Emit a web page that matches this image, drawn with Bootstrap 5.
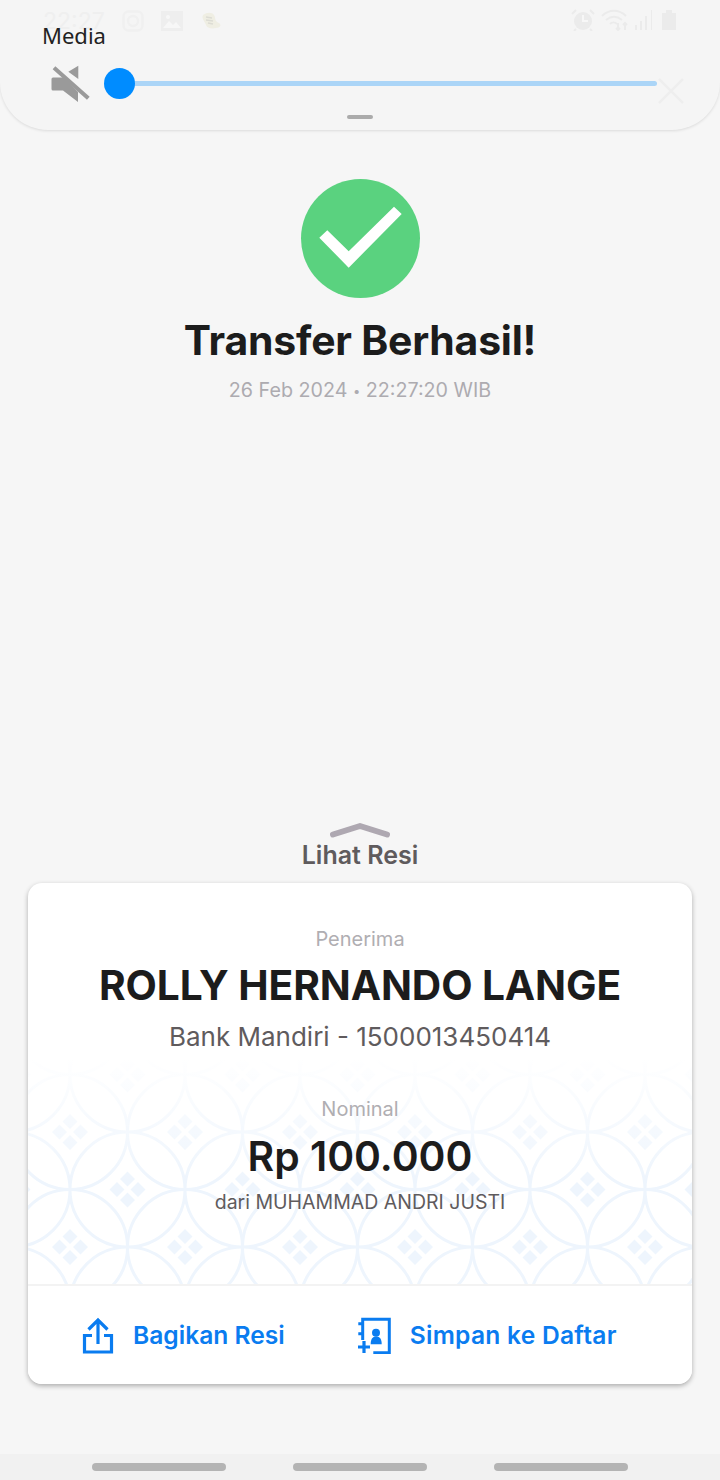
<!DOCTYPE html>
<html lang="en">
<head>
  <meta charset="UTF-8" />
  <meta name="viewport" content="width=device-width, initial-scale=1.0"/>
  <title>Transfer Berhasil</title>
  <link href="https://cdn.jsdelivr.net/npm/bootstrap@5.3.0/dist/css/bootstrap.min.css" rel="stylesheet" />
  <style>
    html, body { width: 720px; height: 1480px; overflow: hidden; }
    body { background: #f6f6f6; font-family: Inter, "Liberation Sans", sans-serif; color: #1c1c1c; }
    .screen { height: 1480px; }

    .media-panel { height: 130px; background: #f5f5f5; border-radius: 0 0 48px 48px; box-shadow: 0 1px 3px rgba(0,0,0,.11); position: relative; }
    .ghost-left { position: absolute; left: 43px; top: 9px; height: 24px; gap: 17px; color: #efefef; font-size: 23px; }
    .ghost-right { position: absolute; left: 571px; top: 9px; gap: 6px; }
    .media-label { position: absolute; left: 42px; top: 21px; font-size: 22px; line-height: 28px; color: #222; font-family: "Noto Sans", sans-serif; }
    .media-mute { position: absolute; left: 50px; top: 64px; }
    .media-track { position: absolute; left: 120px; top: 81px; width: 537px; height: 5px; border-radius: 3px; background: #abd5f7; }
    .media-thumb { position: absolute; left: 104px; top: 68px; width: 31px; height: 31px; border-radius: 50%; background: #008cff; }
    .media-close { position: absolute; left: 657px; top: 77px; }
    .media-handle { position: absolute; left: 347px; top: 115px; width: 26px; height: 4px; border-radius: 2px; background: #ababab; }

    .check-circle { width: 119px; height: 119px; margin-top: 49px; display: block; }
    .done-title { font-size: 40.9px; font-weight: 700; line-height: 46px; margin-top: 19px; letter-spacing: -.2px; }
    .done-date { font-size: 19.7px; line-height: 26px; margin-top: 14px; color: #adabb0; }
    .date-dot { font-size: 13px; vertical-align: 1px; }

    .receipt-toggle { margin-bottom: 14px; }
    .receipt-label { font-size: 25px; font-weight: 600; line-height: 28px; color: #5f5b5d; margin-top: -1px; }

    .receipt-card { margin: 0 28px 70px; height: 501px; border: 0; border-radius: 14px; box-shadow: 0 2px 5px rgba(0,0,0,.3); overflow: hidden; background: #fff; }
    .receipt-body { height: 401px; padding-top: 44px; position: relative; }
    .batik-bg { position: absolute; left: 0; bottom: 0; width: 664px; height: 226px; }
    .receipt-text { position: relative; }
    .field-label { font-size: 20px; line-height: 24px; color: #b0aeb2; }
    .payee-name { font-size: 40.7px; font-weight: 700; line-height: 46px; margin-top: 12px; letter-spacing: -.1px; }
    .payee-bank { font-size: 26px; line-height: 34px; color: #5f5b5d; margin-top: 11px; }
    .nominal-label { margin-top: 43px; }
    .nominal-value { font-size: 40.8px; font-weight: 600; line-height: 46px; margin-top: 12px; }
    .nominal-from { font-size: 19.5px; line-height: 26px; color: #5f5b5d; margin-top: 10px; }

    .receipt-actions { height: 100px; border-top: 2px solid #f3f3f3; background: #fff; padding-left: 53px; gap: 71px; }
    .action-link { gap: 18px; font-size: 24.6px; font-weight: 600; color: #0a7cf0; text-decoration: none; }
    .action-save { letter-spacing: .25px; }

    .nav-strip { height: 26px; background: #f1f1f1; margin-top: auto; gap: 67px; }
    .nav-pill { width: 134px; height: 8px; border-radius: 4px; background: #b4b4b4; }
  </style>
</head>
<body>
  <div class="screen d-flex flex-column">
    <div class="media-panel flex-shrink-0">
      <div class="ghost-left d-flex align-items-center">
        <span>22:27</span>
        <svg width="22" height="22" viewBox="0 0 22 22" fill="none" stroke="#f0f0f0" stroke-width="2.4"><rect x="1.500" y="1.500" width="19" height="19" rx="5"/><circle cx="11" cy="11" r="5"/></svg>
        <svg width="22" height="20" viewBox="0 0 22 20"><rect width="22" height="20" fill="#eeeeee"/><path d="M2 17l6-7 4 4 3-3 5 6z" fill="#f7f7f7"/><circle cx="7" cy="6" r="2" fill="#f7f7f7"/></svg>
        <svg width="22" height="18" viewBox="0 0 22 18"><path d="M3 3c4-3 9-3 11 0s0 6 5 8c3 2 1 5-3 5-5 1-9 0-10-3S1 6 3 3z" fill="#efeee3"/><path d="M6 5l6 1M6 8l7 1M8 11l5 1" stroke="#dcdcd4" stroke-width="1.500"/></svg>
      </div>
      <div class="ghost-right d-flex align-items-center">
        <svg width="24" height="22" viewBox="0 0 24 22"><circle cx="12" cy="12" r="9" fill="#ebebeb"/><path d="M12 6v6h5" fill="none" stroke="#f7f7f7" stroke-width="2"/><path d="M1 5l4-4M23 5l-4-4M5 20l-2 2M19 20l2 2" stroke="#ebebeb" stroke-width="2"/></svg>
        <svg width="28" height="22" viewBox="0 0 28 22" fill="none" stroke="#ebebeb" stroke-width="2"><path d="M1 7c7-7 17-7 24 0M5 11c5-4 11-4 16 0M9 15c2-2 5-2 7 0"/><path d="M17 14v7M15 19l2 2 2-2M24 21v-7M22 16l2-2 2 2"/></svg>
        <svg width="21" height="22" viewBox="0 0 21 22" fill="#ebebeb"><rect y="16" width="2" height="5"/><rect x="5" y="12" width="2" height="9"/><rect x="10" y="7" width="2" height="14"/><rect x="16" y="1" width="1" height="20"/></svg>
        <svg width="14" height="22" viewBox="0 0 14 22"><path d="M0 21V4h4V1h6v3h4v17z" fill="#ebebeb"/></svg>
      </div>
      <div class="media-label">Media</div>
      <svg class="media-mute" width="40" height="40" viewBox="0 0 40 40"><path d="M3 13.500h11L28 28v10L13 26.500H3a1.500 1.500 0 0 1-1.500-1.500V15A1.500 1.500 0 0 1 3 13.500zM28.300 1.700V15l-10-7.300z" fill="#9a9a9a"/><path d="M4 3.700l34.300 30.600" stroke="#9a9a9a" stroke-width="4"/></svg>
      <div class="media-track"></div>
      <div class="media-thumb"></div>
      <svg class="media-close" width="28" height="28" viewBox="0 0 28 28"><path d="M2 2l24 24M26 2L2 26" stroke="#eeeeee" stroke-width="2.500"/></svg>
      <div class="media-handle"></div>
    </div>

    <div class="text-center d-flex flex-column align-items-center flex-grow-1">
      <svg class="check-circle" viewBox="0 0 119 119"><circle cx="59.500" cy="59.500" r="59.500" fill="#5ad27f"/><path d="M26.300 51.300L18.300 58.700 47.700 88.700 100.700 35 93 27.700 47.700 72.300z" fill="#fff"/></svg>
      <div class="done-title">Transfer Berhasil!</div>
      <div class="done-date">26 Feb 2024 <span class="date-dot">•</span> 22:27:20 WIB</div>

      <div class="receipt-toggle mt-auto d-flex flex-column align-items-center">
        <svg width="60" height="20" viewBox="0 0 60 20"><path d="M3 12.500L30 4l27 8.500" fill="none" stroke="#aea8b1" stroke-width="6" stroke-linecap="round" stroke-linejoin="round"/></svg>
        <div class="receipt-label">Lihat Resi</div>
      </div>
    </div>

    <div class="card receipt-card flex-shrink-0">
      <div class="receipt-body text-center">
        <svg class="batik-bg" viewBox="0 0 664 226">
          <defs>
            <g id="dots" fill="#eef5fd">
              <path d="M0-18l7.500 7.500L0-3l-7.500-7.500zM0 3l7.500 7.500L0 18l-7.500-7.500zM-10.500-7.500L-3 0l-7.500 7.500L-18 0zM10.500-7.500L18 0l-7.500 7.500L3 0z"/>
            </g>
            <pattern id="batik" width="115" height="115" patternUnits="userSpaceOnUse" x="42" y="-41">
              <g fill="none" stroke="#eef5fd" stroke-width="3">
                <circle cx="0" cy="0" r="57.500"/><circle cx="115" cy="0" r="57.500"/>
                <circle cx="0" cy="115" r="57.500"/><circle cx="115" cy="115" r="57.500"/>
                <circle cx="57.500" cy="57.500" r="57.500"/>
              </g>
              <use href="#dots" x="0" y="0"/><use href="#dots" x="115" y="0"/>
              <use href="#dots" x="0" y="115"/><use href="#dots" x="115" y="115"/>
              <use href="#dots" x="57.500" y="57.500"/>
            </pattern>
            <linearGradient id="fade" x1="0" y1="0" x2="0" y2="1">
              <stop offset="0" stop-color="#fff"/><stop offset=".55" stop-color="#fff" stop-opacity="0"/>
            </linearGradient>
          </defs>
          <rect width="664" height="226" fill="url(#batik)"/>
          <rect width="664" height="226" fill="url(#fade)"/>
        </svg>
        <div class="receipt-text">
          <div class="field-label">Penerima</div>
          <div class="payee-name">ROLLY HERNANDO LANGE</div>
          <div class="payee-bank">Bank Mandiri - 1500013450414</div>
          <div class="field-label nominal-label">Nominal</div>
          <div class="nominal-value">Rp 100.000</div>
          <div class="nominal-from">dari MUHAMMAD ANDRI JUSTI</div>
        </div>
      </div>
      <div class="receipt-actions d-flex align-items-center">
        <a class="action-link d-flex align-items-center" href="#">
          <svg width="34" height="37" viewBox="0 0 34 37" fill="none" stroke="#0a7cf0" stroke-width="3.200"><path d="M11 18.500H3.500V35h27V18.500H23"/><path d="M17 27V3.500M7.500 12.500L17 3l9.500 9.500"/></svg>
          Bagikan Resi
        </a>
        <a class="action-link action-save d-flex align-items-center" href="#">
          <svg width="36" height="37" viewBox="0 0 36 37"><path d="M6.700 6.700V2.300h26.600v33.400H17.300M6.700 6.700H2.300M2.300 16.700h4.400V6.700M6.700 16.700V23" fill="none" stroke="#0a7cf0" stroke-width="3"/><path d="M2 30h12M8 24v12" stroke="#0a7cf0" stroke-width="3.200"/><circle cx="20" cy="15.700" r="4" fill="#0a7cf0"/><path d="M14.700 27.300c0-5 1.500-7.800 5.500-7.800s5.500 2.800 5.500 7.800z" fill="#0a7cf0"/></svg>
          Simpan ke Daftar
        </a>
      </div>
    </div>

    <div class="nav-strip flex-shrink-0 d-flex justify-content-center align-items-center">
      <div class="nav-pill"></div><div class="nav-pill"></div><div class="nav-pill"></div>
    </div>
  </div>
  <script src="https://cdn.jsdelivr.net/npm/bootstrap@5.3.0/dist/js/bootstrap.bundle.min.js"></script>
</body>
</html>
